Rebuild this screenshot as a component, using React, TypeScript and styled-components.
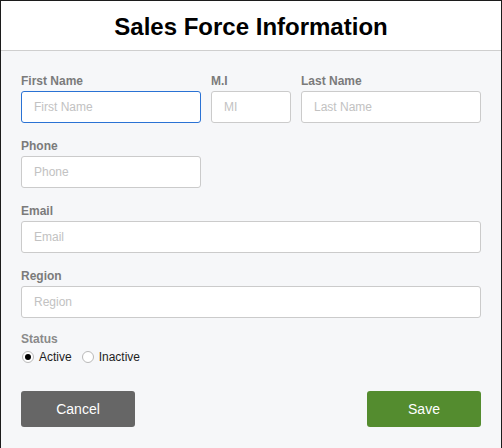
import { useState } from "react";
import styled, { createGlobalStyle } from "styled-components";

const GlobalStyle = createGlobalStyle`
  html, body {
    margin: 0;
    padding: 0;
    background: #f6f7f9;
    font-family: "Liberation Sans", Arial, sans-serif;
  }
  * {
    box-sizing: border-box;
  }
`;

const Panel = styled.div`
  width: 502px;
  height: 448px;
  border: 1px solid #1c1c1c;
  border-bottom: none;
  background: #f6f7f9;
  overflow: hidden;
`;

const Header = styled.div`
  height: 50px;
  background: #fff;
  border-bottom: 1px solid #cfcfcf;
  display: flex;
  align-items: center;
  justify-content: center;
`;

const Title = styled.h1`
  margin: 0;
  font-size: 24px;
  font-weight: 700;
  color: #000;
  padding-top: 2px;
`;

const Body = styled.form`
  padding: 23px 20px 0 20px;
  display: flex;
  flex-direction: column;
  gap: 16px;
`;

const Row = styled.div`
  display: flex;
  gap: 10px;
`;

const Field = styled.div<{ $width: number }>`
  width: ${(p) => p.$width}px;
  display: flex;
  flex-direction: column;
  gap: 3px;
`;

const Label = styled.label`
  font-size: 12px;
  font-weight: 700;
  color: #7b7b7b;
  line-height: 14px;
`;

const Input = styled.input<{ $focused?: boolean }>`
  height: 32px;
  width: 100%;
  border: 1px solid ${(p) => (p.$focused ? "#2a72d4" : "#cbcbcb")};
  border-radius: 3px;
  background: #fff;
  padding: 0 12px;
  font-family: "Liberation Sans", Arial, sans-serif;
  font-size: 12px;
  color: #222;
  outline: none;
  caret-color: #000;
  &::placeholder {
    color: #c2c2c2;
  }
`;

const StatusGroup = styled.div`
  display: flex;
  flex-direction: column;
  gap: 4px;
  margin-top: -2px;
`;

const StatusLabel = styled.div`
  font-size: 12px;
  font-weight: 700;
  color: #8a8a8a;
  line-height: 14px;
`;

const RadioRow = styled.div`
  display: flex;
  align-items: center;
  gap: 9px;
  height: 14px;
`;

const RadioOption = styled.label`
  display: flex;
  align-items: center;
  gap: 5px;
  font-size: 12px;
  color: #1e1e1e;
  cursor: pointer;
`;

const Radio = styled.input`
  appearance: none;
  margin: 0 0 0 1px;
  width: 12px;
  height: 12px;
  border-radius: 50%;
  border: 1px solid #b9b9b9;
  background: #fff;
  display: grid;
  place-items: center;
  &:checked::after {
    content: "";
    width: 6px;
    height: 6px;
    border-radius: 50%;
    background: #000;
  }
`;

const Actions = styled.div`
  display: flex;
  justify-content: space-between;
  margin-top: 11px;
`;

const Button = styled.button<{ $variant: "cancel" | "save" }>`
  width: 114px;
  height: 36px;
  border: none;
  border-radius: 3px;
  background: ${(p) => (p.$variant === "save" ? "#548c2f" : "#666666")};
  color: #fff;
  font-family: "Liberation Sans", Arial, sans-serif;
  font-size: 14px;
  cursor: pointer;
`;

const App = () => {
  const [status, setStatus] = useState("active");

  return (
    <>
      <GlobalStyle />
      <Panel>
        <Header>
          <Title>Sales Force Information</Title>
        </Header>
        <Body onSubmit={(e) => e.preventDefault()}>
          <Row>
            <Field $width={180}>
              <Label>First Name</Label>
              <Input placeholder="First Name" $focused autoFocus />
            </Field>
            <Field $width={80}>
              <Label>M.I</Label>
              <Input placeholder="MI" />
            </Field>
            <Field $width={180}>
              <Label>Last Name</Label>
              <Input placeholder="Last Name" />
            </Field>
          </Row>
          <Field $width={180}>
            <Label>Phone</Label>
            <Input placeholder="Phone" />
          </Field>
          <Field $width={460}>
            <Label>Email</Label>
            <Input placeholder="Email" />
          </Field>
          <Field $width={460}>
            <Label>Region</Label>
            <Input placeholder="Region" />
          </Field>
          <StatusGroup>
            <StatusLabel>Status</StatusLabel>
            <RadioRow>
              <RadioOption>
                <Radio
                  type="radio"
                  name="status"
                  checked={status === "active"}
                  onChange={() => setStatus("active")}
                />
                Active
              </RadioOption>
              <RadioOption>
                <Radio
                  type="radio"
                  name="status"
                  checked={status === "inactive"}
                  onChange={() => setStatus("inactive")}
                />
                Inactive
              </RadioOption>
            </RadioRow>
          </StatusGroup>
          <Actions>
            <Button type="button" $variant="cancel">
              Cancel
            </Button>
            <Button type="submit" $variant="save">
              Save
            </Button>
          </Actions>
        </Body>
      </Panel>
    </>
  );
};

export default App;
